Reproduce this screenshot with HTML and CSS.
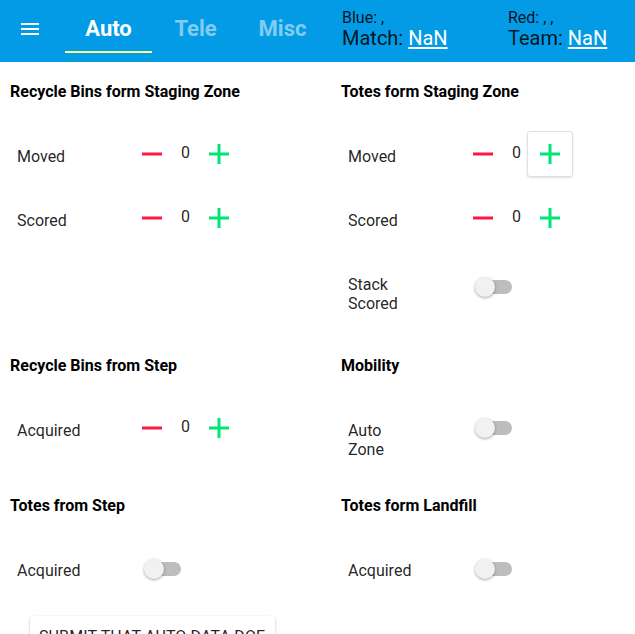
FILE: index.html
```html
<!DOCTYPE html>
<html>
<head>
<meta charset="utf-8">
<link rel="stylesheet" href="styles.css">
</head>
<body>
<header class="toolbar">
  <button class="menu-btn" aria-label="Menu">
    <svg width="18" height="12" viewBox="0 0 18 12"><rect x="0" y="0" width="18" height="2" fill="#fff"/><rect x="0" y="5" width="18" height="2" fill="#fff"/><rect x="0" y="10" width="18" height="2" fill="#fff"/></svg>
  </button>
  <nav class="tabs">
    <div class="tab active">Auto</div>
    <div class="tab">Tele</div>
    <div class="tab">Misc</div>
  </nav>
  <div class="info">
    <div class="info-block">
      <div class="info-small">Blue: ,</div>
      <div class="info-big">Match: <a href="#" class="info-link">NaN</a></div>
    </div>
    <div class="info-block info-block-last">
      <div class="info-small">Red: , ,</div>
      <div class="info-big">Team: <a href="#" class="info-link">NaN</a></div>
    </div>
  </div>
</header>

<main class="content">
  <div class="sections">
    <section class="section">
      <h3 class="section-title">Recycle Bins form Staging Zone</h3>
      <div class="row">
        <div class="label">Moved</div>
        <div class="counter">
          <button class="icon-btn minus"><svg width="20" height="20" viewBox="0 0 20 20"><rect x="0" y="8.5" width="20" height="3" fill="#ff1744"/></svg></button>
          <span class="value">0</span>
          <button class="icon-btn plus"><svg width="20" height="20" viewBox="0 0 20 20"><rect x="0" y="8.5" width="20" height="3" fill="#00e676"/><rect x="8.5" y="0" width="3" height="20" fill="#00e676"/></svg></button>
        </div>
      </div>
      <div class="row">
        <div class="label">Scored</div>
        <div class="counter">
          <button class="icon-btn minus"><svg width="20" height="20" viewBox="0 0 20 20"><rect x="0" y="8.5" width="20" height="3" fill="#ff1744"/></svg></button>
          <span class="value">0</span>
          <button class="icon-btn plus"><svg width="20" height="20" viewBox="0 0 20 20"><rect x="0" y="8.5" width="20" height="3" fill="#00e676"/><rect x="8.5" y="0" width="3" height="20" fill="#00e676"/></svg></button>
        </div>
      </div>
    </section>

    <section class="section">
      <h3 class="section-title">Totes form Staging Zone</h3>
      <div class="row">
        <div class="label">Moved</div>
        <div class="counter">
          <button class="icon-btn minus"><svg width="20" height="20" viewBox="0 0 20 20"><rect x="0" y="8.5" width="20" height="3" fill="#ff1744"/></svg></button>
          <span class="value">0</span>
          <button class="icon-btn plus focused"><svg width="20" height="20" viewBox="0 0 20 20"><rect x="0" y="8.5" width="20" height="3" fill="#00e676"/><rect x="8.5" y="0" width="3" height="20" fill="#00e676"/></svg></button>
        </div>
      </div>
      <div class="row">
        <div class="label">Scored</div>
        <div class="counter">
          <button class="icon-btn minus"><svg width="20" height="20" viewBox="0 0 20 20"><rect x="0" y="8.5" width="20" height="3" fill="#ff1744"/></svg></button>
          <span class="value">0</span>
          <button class="icon-btn plus"><svg width="20" height="20" viewBox="0 0 20 20"><rect x="0" y="8.5" width="20" height="3" fill="#00e676"/><rect x="8.5" y="0" width="3" height="20" fill="#00e676"/></svg></button>
        </div>
      </div>
      <div class="row row-stack">
        <div class="label label-narrow">Stack Scored</div>
        <div class="switch"></div>
      </div>
    </section>

    <section class="section">
      <h3 class="section-title">Recycle Bins from Step</h3>
      <div class="row">
        <div class="label">Acquired</div>
        <div class="counter">
          <button class="icon-btn minus"><svg width="20" height="20" viewBox="0 0 20 20"><rect x="0" y="8.5" width="20" height="3" fill="#ff1744"/></svg></button>
          <span class="value">0</span>
          <button class="icon-btn plus"><svg width="20" height="20" viewBox="0 0 20 20"><rect x="0" y="8.5" width="20" height="3" fill="#00e676"/><rect x="8.5" y="0" width="3" height="20" fill="#00e676"/></svg></button>
        </div>
      </div>
    </section>

    <section class="section">
      <h3 class="section-title">Mobility</h3>
      <div class="row">
        <div class="label label-narrow">Auto Zone</div>
        <div class="switch switch-high"></div>
      </div>
    </section>

    <section class="section">
      <h3 class="section-title">Totes from Step</h3>
      <div class="row">
        <div class="label">Acquired</div>
        <div class="switch"></div>
      </div>
    </section>

    <section class="section">
      <h3 class="section-title">Totes form Landfill</h3>
      <div class="row">
        <div class="label">Acquired</div>
        <div class="switch"></div>
      </div>
    </section>
  </div>

  <button class="submit-btn">SUBMIT THAT AUTO DATA DOE</button>
</main>
</body>
</html>
```

FILE: styles.css
```css
* { box-sizing: border-box; }

html, body {
  margin: 0;
  padding: 0;
  background: #fff;
  font-family: Roboto, "Noto Sans", Arial, sans-serif;
  color: rgba(0, 0, 0, 0.87);
}

.toolbar {
  display: flex;
  height: 62px;
  background: #039be5;
  overflow: hidden;
}

.menu-btn {
  flex: 0 0 65px;
  width: 65px;
  height: 62px;
  border: 0;
  padding: 23px 0 0 21px;
  background: transparent;
  display: flex;
  align-items: flex-start;
  justify-content: flex-start;
}

.menu-btn svg { display: block; }

.tabs {
  display: flex;
  flex: 0 0 auto;
}

.tab {
  width: 87px;
  display: flex;
  flex-direction: column;
  align-items: center;
  padding-top: 16px;
  font-size: 22px;
  line-height: 26px;
  font-weight: 700;
  color: rgba(255, 255, 255, 0.5);
}

.tab.active { color: #fff; }

.tab.active::after {
  content: "";
  display: block;
  width: 87px;
  height: 2px;
  margin-top: 9px;
  background: #ffff8d;
}

.info {
  display: flex;
  flex: 1 1 auto;
  margin-left: 16px;
  padding-top: 9px;
}

.info-block { flex: 0 0 166px; }
.info-block-last { flex: 1 1 auto; }

.info-small {
  font-size: 16px;
  line-height: 18px;
}

.info-big {
  font-size: 20px;
  line-height: 23px;
}

.info-link {
  color: #fff;
  text-decoration: underline;
  text-underline-offset: 2px;
}

.content {
  padding-left: 10px;
}

.sections {
  display: grid;
  grid-template-columns: 331px 1fr;
  grid-template-rows: 274px 140px auto;
}

.section {
  padding-top: 20px;
}

.section-title {
  margin: 0 0 24px;
  font-size: 16px;
  line-height: 20px;
  font-weight: 700;
  color: #000;
}

.row {
  display: flex;
  align-items: flex-start;
  height: 64px;
  padding-left: 7px;
}

.label {
  width: 112px;
  padding-top: 21px;
  font-size: 16px;
  line-height: 19px;
}

.label-narrow { padding-right: 60px; }

.counter {
  display: flex;
  align-items: flex-start;
}

.icon-btn {
  width: 46px;
  height: 46px;
  margin-top: 5px;
  padding: 0;
  border: 1px solid transparent;
  border-radius: 3px;
  background: transparent;
  display: flex;
  align-items: center;
  justify-content: center;
}

.icon-btn svg { display: block; }

.icon-btn.focused {
  border-color: #e0e0e0;
  box-shadow: 0 1px 2px rgba(0, 0, 0, 0.12);
}

.value {
  width: 21px;
  padding-top: 17px;
  text-align: center;
  font-size: 16px;
  line-height: 19px;
}

.switch {
  position: relative;
  width: 34px;
  height: 14px;
  margin-left: 18px;
  margin-top: 22px;
  border-radius: 7px;
  background: #bdbdbd;
}

.row-stack .switch { margin-top: 26px; }
.switch-high { margin-top: 21px; }

.switch::before {
  content: "";
  position: absolute;
  left: -3px;
  top: -3px;
  width: 20px;
  height: 20px;
  border-radius: 50%;
  background: #f1f1f1;
  box-shadow: 0 1px 3px rgba(0, 0, 0, 0.35);
}

.submit-btn {
  margin: 12px 0 0 20px;
  padding: 11px 10px 5px 9px;
  border: 0;
  border-radius: 3px;
  background: #fff;
  box-shadow: 0 1px 3px rgba(0, 0, 0, 0.25);
  font-family: Roboto, Arial, sans-serif;
  font-size: 16px;
  line-height: 20px;
  letter-spacing: 0.12px;
  color: rgba(0, 0, 0, 0.87);
}
```
